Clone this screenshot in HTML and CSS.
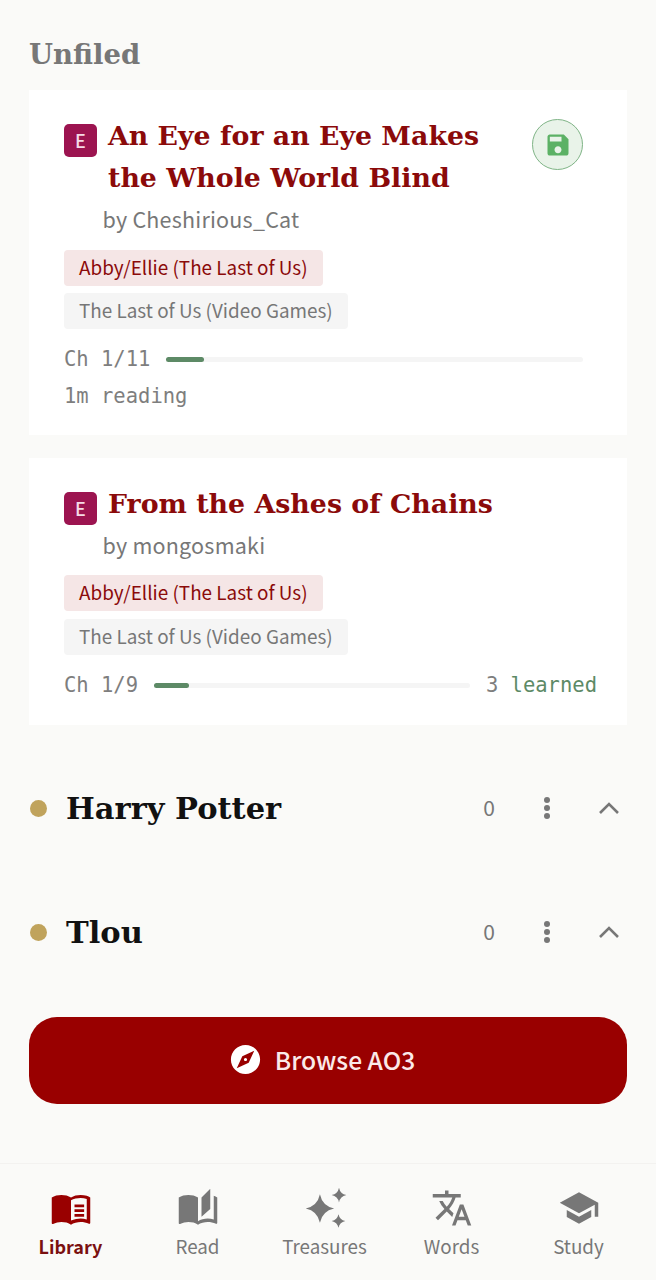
FILE: index.html
```html
<!DOCTYPE html>
<html lang="en">
<head>
    <meta charset="UTF-8">
    <meta name="viewport" content="width=device-width, initial-scale=1.0">
    <title>Library</title>
    <link rel="stylesheet" href="styles.css">
</head>
<body>
    <main class="content">
        <h2 class="section-title">Unfiled</h2>

        <article class="card card-first">
            <div class="card-head">
                <span class="rating">E</span>
                <h3 class="work-title">An Eye for an Eye Makes the Whole World Blind</h3>
                <span class="save-btn">
                    <svg viewBox="0 0 24 24" class="save-icon"><path d="M17 3H5c-1.11 0-2 .9-2 2v14c0 1.1.89 2 2 2h14c1.1 0 2-.9 2-2V7l-4-4zm-5 16c-1.66 0-3-1.34-3-3s1.34-3 3-3 3 1.34 3 3-1.34 3-3 3zm3-10H5V5h10v4z"/></svg>
                </span>
            </div>
            <p class="author">by Cheshirious_Cat</p>
            <div class="tags">
                <span class="tag tag-ship">Abby/Ellie (The Last of Us)</span>
                <span class="tag">The Last of Us (Video Games)</span>
            </div>
            <div class="progress-row">
                <span class="mono">Ch 1/11</span>
                <div class="bar"><div class="bar-fill" style="width: 9%"></div></div>
            </div>
            <p class="mono reading">1m reading</p>
        </article>

        <article class="card card-second">
            <div class="card-head">
                <span class="rating">E</span>
                <h3 class="work-title">From the Ashes of Chains</h3>
            </div>
            <p class="author">by mongosmaki</p>
            <div class="tags">
                <span class="tag tag-ship">Abby/Ellie (The Last of Us)</span>
                <span class="tag">The Last of Us (Video Games)</span>
            </div>
            <div class="progress-row">
                <span class="mono">Ch 1/9</span>
                <div class="bar"><div class="bar-fill" style="width: 11%"></div></div>
                <span class="mono learned"><span class="learned-num">3</span> learned</span>
            </div>
        </article>

        <section class="group">
            <span class="dot"></span>
            <h2 class="group-name">Harry Potter</h2>
            <span class="count">0</span>
            <svg viewBox="0 0 24 24" class="more"><circle cx="12" cy="4" r="3"/><circle cx="12" cy="12" r="3"/><circle cx="12" cy="20" r="3"/></svg>
            <svg viewBox="0 0 24 24" class="chevron"><path d="M3 17l9-9 9 9"/></svg>
        </section>

        <section class="group">
            <span class="dot"></span>
            <h2 class="group-name">Tlou</h2>
            <span class="count">0</span>
            <svg viewBox="0 0 24 24" class="more"><circle cx="12" cy="4" r="3"/><circle cx="12" cy="12" r="3"/><circle cx="12" cy="20" r="3"/></svg>
            <svg viewBox="0 0 24 24" class="chevron"><path d="M3 17l9-9 9 9"/></svg>
        </section>

        <button class="browse">
            <svg viewBox="0 0 24 24" class="browse-icon"><path d="M12 10.9c-.61 0-1.1.49-1.1 1.1s.49 1.1 1.1 1.1c.61 0 1.1-.49 1.1-1.1s-.49-1.1-1.1-1.1zM12 2C6.48 2 2 6.48 2 12s4.48 10 10 10 10-4.48 10-10S17.52 2 12 2zm2.19 12.19L6 18l3.81-8.19L18 6l-3.81 8.19z"/></svg>
            Browse AO3
        </button>
    </main>

    <nav class="tabbar">
        <a class="tab tab-active">
            <svg viewBox="0 0 24 24"><path d="M21 5c-1.11-.35-2.33-.5-3.5-.5-1.95 0-4.05.4-5.5 1.5-1.45-1.1-3.55-1.5-5.5-1.5S2.45 4.9 1 6v14.65c0 .25.25.5.5.5.1 0 .15-.05.25-.05C3.1 20.45 5.05 20 6.5 20c1.95 0 4.05.4 5.5 1.5 1.35-.85 3.8-1.5 5.5-1.5 1.65 0 3.35.3 4.75 1.05.1.05.15.05.25.05.25 0 .5-.25.5-.5V6c-.6-.45-1.25-.75-2-1zm0 13.5c-1.1-.35-2.3-.5-3.5-.5-1.2 0-3.9.4-5.5 1.2V7.5c1.4-.8 3.8-1.2 5.5-1.2 1.2 0 2.4.15 3.5.5v11.7zM14 10h5.5v1.6H14zM14 12.7h5.5v1.6H14zM14 15.4h5.5V17H14z"/></svg>
            <span>Library</span>
        </a>
        <a class="tab">
            <svg viewBox="0 0 24 24"><path d="M19 1l-5 5v11l5-4.5V1zM1 6v14.65c0 .25.25.5.5.5.1 0 .15-.05.25-.05C3.1 20.45 5.05 20 6.5 20c1.95 0 4.05.4 5.5 1.5V6c-1.45-1.1-3.55-1.5-5.5-1.5S2.45 4.9 1 6zm22 13.5V6c-.6-.45-1.25-.75-2-1v13.5c-1.1-.35-2.3-.5-3.5-.5-1.7 0-4.15.65-5.5 1.5v2c1.35-.85 3.8-1.5 5.5-1.5 1.65 0 3.35.3 4.75 1.05.1.05.15.05.25.05.25 0 .5-.25.5-.5v-1.1z"/></svg>
            <span>Read</span>
        </a>
        <a class="tab">
            <svg viewBox="0 0 24 24"><path d="M9.1 4.2Q10.5 10.900 17.200 12.300 10.500 13.700 9.100 20.400 7.700 13.700 1 12.300 7.700 10.900 9.100 4.200zM20 .4Q20.700 3.900 24.200 4.600 20.700 5.300 20 8.800 19.300 5.300 15.800 4.600 19.300 3.900 20 .4zM19.700 15.500Q20.400 18.700 23.600 19.400 20.400 20.100 19.700 23.300 19 20.100 15.800 19.400 19 18.700 19.700 15.500z"/></svg>
            <span>Treasures</span>
        </a>
        <a class="tab">
            <svg viewBox="0 0 24 24"><path d="M12.87 15.07l-2.54-2.51.03-.03c1.74-1.94 2.98-4.17 3.71-6.53H17V4h-7V2H8v2H1v1.99h11.17C11.5 7.92 10.44 9.75 9 11.35 8.07 10.32 7.3 9.19 6.69 8h-2c.73 1.63 1.73 3.17 2.98 4.56l-5.09 5.02L4 19l5-5 3.11 3.11.76-2.04zM18.5 10h-2L12 22h2l1.12-3h4.75L21 22h2l-4.5-12zm-2.62 7l1.62-4.33L19.12 17h-3.24z"/></svg>
            <span>Words</span>
        </a>
        <a class="tab">
            <svg viewBox="0 0 24 24"><path d="M5 13.18v4L12 21l7-3.82v-4L12 17l-7-3.82zM12 3L1 9l11 6 9-4.91V17h2V9L12 3z"/></svg>
            <span>Study</span>
        </a>
    </nav>
</body>
</html>
```

FILE: styles.css
```css
* {
    margin: 0;
    padding: 0;
    box-sizing: border-box;
}

body {
    background-color: #fafaf8;
    font-family: "Noto Sans CJK JP", "Noto Sans", sans-serif;
    color: #777;
    width: 656px;
    height: 1280px;
    display: flex;
    flex-direction: column;
    overflow: hidden;
}

.content {
    flex: 1;
    padding: 34px 29px 0;
}

.section-title {
    font: bold 27.5px/40px "DejaVu Serif", serif;
    color: #777;
    margin-bottom: 16px;
}

.card {
    background-color: #fff;
    padding: 25px 30px 0 35px;
}

.card-first {
    height: 345px;
    margin-bottom: 23px;
}

.card-second {
    height: 267px;
    margin-bottom: 53px;
}

.card-head {
    display: flex;
    align-items: flex-start;
}

.rating {
    flex: none;
    width: 33px;
    height: 33px;
    margin-top: 9px;
    margin-right: 11px;
    border-radius: 5px;
    background-color: #9c1450;
    color: #f5dbe6;
    font-size: 18px;
    font-weight: 500;
    line-height: 33px;
    text-align: center;
}

.work-title {
    flex: 1;
    font: bold 26.8px/42px "DejaVu Serif", serif;
    color: #8b0a0a;
}

.save-btn {
    flex: none;
    width: 51px;
    height: 51px;
    margin: 4px 14px 0 40px;
    border: 1px solid #7fb486;
    border-radius: 50%;
    background-color: #e9f3e9;
    display: flex;
    align-items: center;
    justify-content: center;
}

.save-icon {
    width: 28px;
    height: 28px;
    fill: #5cb165;
}

.author {
    font-size: 21.5px;
    letter-spacing: 0.22px;
    line-height: 32px;
    margin: 4px 0 15px 38.5px;
    color: #777;
}

.card-second .author {
    margin-top: 4px;
    margin-bottom: 14px;
}

.tags {
    display: flex;
    flex-direction: column;
    align-items: flex-start;
    gap: 7px;
}

.card-second .tags {
    gap: 8px;
}

.tag {
    height: 36px;
    padding: 0 15px;
    border-radius: 4px;
    background-color: #f5f5f5;
    font-size: 18.9px;
    line-height: 33px;
    color: #777;
}

.tag-ship {
    background-color: #f5e6e6;
    color: #8b0a0a;
}

.progress-row {
    display: flex;
    align-items: center;
    gap: 16px;
    margin-top: 17px;
    height: 26px;
}

.mono {
    font-family: "DejaVu Sans Mono", monospace;
    font-size: 20.5px;
    color: #7e7e7e;
}

.bar {
    flex: 1;
    height: 5px;
    margin-right: 14px;
    border-radius: 3px;
    background-color: #f5f5f5;
}

.card-second .bar {
    margin-right: 0;
}

.bar-fill {
    height: 5px;
    border-radius: 3px;
    background-color: #5d8a66;
}

.reading {
    margin-top: 11px;
    line-height: 26px;
}

.learned {
    color: #5d8a66;
}

.learned-num {
    color: #7e7e7e;
}

.group {
    display: flex;
    align-items: center;
    height: 60px;
    margin-bottom: 64px;
}

.dot {
    flex: none;
    width: 17px;
    height: 17px;
    border-radius: 50%;
    background-color: #c0a35c;
    margin: 1px 19px 0 1px;
}

.group-name {
    flex: 1;
    font: bold 30.5px/44px "DejaVu Serif", serif;
    color: #111;
}

.count {
    font-size: 21px;
    line-height: 28px;
    width: 30px;
    padding-bottom: 2px;
    margin-right: -1px;
    text-align: center;
}

.more {
    width: 24px;
    height: 24px;
    margin: 0 0 0 32px;
    fill: #777;
}

.chevron {
    width: 24px;
    height: 24px;
    margin: 0 6px 0 38px;
    fill: none;
    stroke: #777;
    stroke-width: 2.6;
}

.browse {
    display: flex;
    align-items: center;
    justify-content: center;
    gap: 12px;
    width: 100%;
    height: 87px;
    margin-top: -9px;
    padding: 0 13px 3px 0;
    border: none;
    border-radius: 28px;
    background-color: #990000;
    color: #fbe9e9;
    font: 500 24.6px "Noto Sans CJK JP", "Noto Sans", sans-serif;
}

.browse-icon {
    width: 35px;
    height: 35px;
    fill: #fff;
}

.tabbar {
    height: 117px;
    padding: 23px 14px 0 7px;
    display: flex;
    border-top: 1px solid #f3f2f0;
}

.tab {
    flex: 1;
    display: flex;
    flex-direction: column;
    align-items: center;
    font-size: 18.8px;
    color: #777;
}

.tab span {
    line-height: 28px;
}

.tab svg {
    width: 42px;
    height: 42px;
    fill: #777;
    margin-bottom: 3px;
    overflow: visible;
}

.tab-active {
    color: #7a1010;
    font-weight: bold;
    font-size: 18px;
}

.tab-active svg {
    fill: #990000;
}
```
